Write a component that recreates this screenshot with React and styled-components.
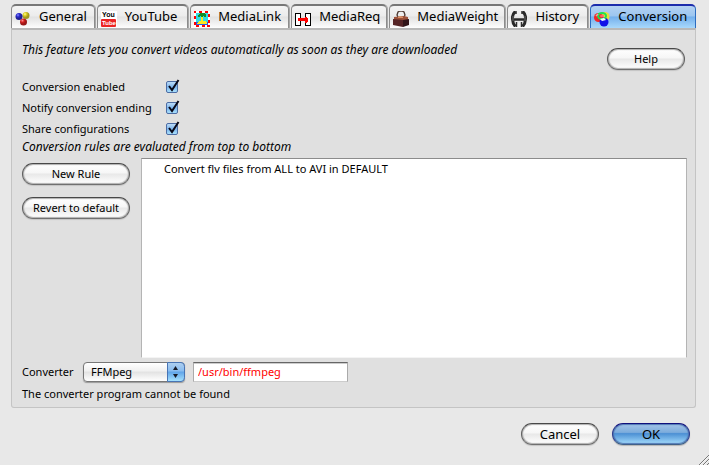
import { useState } from "react";
import styled, { createGlobalStyle } from "styled-components";

const GlobalStyle = createGlobalStyle`
  * {
    box-sizing: border-box;
  }
  body {
    margin: 0;
    background: #fff;
    color: #000;
    font-family: "Noto Sans", "Open Sans", sans-serif;
    font-size: 11px;
    line-height: 16px;
  }
  button, input, select {
    font: inherit;
    color: inherit;
  }
`;

const Window = styled.main`
  position: relative;
  display: flex;
  flex-direction: column;
  min-height: calc(100vh - 6px);
  margin: 0 1px 6px 0;
  padding: 4px 13px 20px 11px;
  background: #e8e8e8;
`;

const TabBar = styled.div`
  display: flex;
  gap: 2px;
  height: 24px;
`;

const Tab = styled.button`
  display: flex;
  flex: ${(props) => props.$weight} 1 0;
  align-items: flex-end;
  gap: 8px;
  min-width: 0;
  padding: 0 0 1px 3px;
  border: 1px solid #666;
  border-color: ${(props) => (props.$active ? "#1c2cac #2c6cc0 #5b86b4" : "#777 #8c8c8c #d0d0d0")};
  border-width: 2px 1px 0;
  border-radius: 5px 5px 0 0;
  background: ${(props) =>
    props.$active
      ? "linear-gradient(#b4d2f2 0, #9cc6f0 45%, #74b0ec 50%, #a8d8fc 100%)"
      : "linear-gradient(#f4f4f4 0, #ececec 45%, #e2e2e2 50%, #fdfdfd 100%)"};
  box-shadow: ${(props) => (props.$active ? "none" : "1px 0 0 #a8a8a8")};
  font-size: 13px;
  line-height: 22px;
  white-space: nowrap;
  svg {
    flex: none;
  }
`;

const Panel = styled.section`
  display: flex;
  flex: 1;
  flex-direction: column;
  padding: 12px 8px 5px 10px;
  border: 1px solid #c4c4c4;
  border-top: 2px solid #b8b8b8;
  border-radius: 0 0 3px 3px;
  background: #e0e0e0;
`;

const Intro = styled.div`
  display: flex;
  align-items: flex-start;
  justify-content: space-between;
  height: 34px;
  padding-right: 2px;
`;

const Note = styled.p`
  margin: 0;
  font-size: 12px;
  font-style: italic;
`;

const PushButton = styled.button`
  min-width: ${(props) => (props.$wide ? "108px" : "78px")};
  height: 22px;
  padding: 0 8px;
  border: 1px solid #666;
  border-color: #484848 #606060 #707070;
  border-radius: 11px;
  background: linear-gradient(#fff 0, #f6f6f6 45%, #e8e8e8 50%, #fff 100%);
  box-shadow: inset 0 0 1px 1px #b0b0b0, 0 1px 1px #c4c4c4;
  font-size: ${(props) => (props.$large ? "13px" : "11px")};
  line-height: 18px;
  white-space: nowrap;
  ${(props) =>
    props.$primary &&
    `
    border-color: #10107c #2c3c8c #406088;
    background: linear-gradient(#a4c4e8 0, #7cacdc 42%, #4c90d4 48%, #a4dcfc 100%);
    box-shadow: inset 0 0 1px 1px #5078b4, 0 1px 1px #b4b4b4;
  `}
`;

const HelpSlot = styled.div`
  padding-top: 6px;
`;

const Options = styled.div`
  display: grid;
  grid-template-columns: 144px 14px;
  grid-auto-rows: 21px;
  align-items: center;
`;

const CheckBox = styled.span`
  position: relative;
  display: block;
  width: 12px;
  height: 12px;
  input {
    display: block;
    appearance: none;
    width: 12px;
    height: 12px;
    margin: 0;
    border: 1px solid #4c6ca4;
    border-radius: 2px;
    background: linear-gradient(#bcdcf8 0, #7cb4ec 50%, #a8e0fc 100%);
  }
  svg {
    position: absolute;
    left: 1px;
    bottom: 1px;
    pointer-events: none;
  }
`;

const Rules = styled.div`
  display: flex;
  flex: 1;
  gap: 11px;
  padding-top: 3px;
`;

const RuleActions = styled.div`
  display: flex;
  flex-direction: column;
  gap: 12px;
  width: 108px;
  padding-top: 5px;
`;

const RuleList = styled.ul`
  flex: 1;
  margin: 0;
  padding: 2px 22px;
  border: 1px solid #b4b4b4;
  border-top-color: #8c8c8c;
  border-bottom-color: #f4f4f4;
  background: #fff;
  list-style: none;
`;

const ConverterRow = styled.div`
  display: flex;
  align-items: center;
  padding-top: 4px;
  label {
    width: 61px;
  }
`;

const PopUp = styled.div`
  position: relative;
  width: 102px;
  height: 20px;
  margin-right: 8px;
  select {
    appearance: none;
    display: block;
    width: 100%;
    height: 20px;
    padding: 0 20px 0 7px;
    border: 1px solid #777;
    border-radius: 4px;
    background: linear-gradient(#fff 0, #f0f0f0 45%, #e2e2e2 50%, #fff 100%);
    box-shadow: 0 1px 1px #999;
  }
  svg {
    position: absolute;
    top: 0;
    right: 0;
    pointer-events: none;
  }
`;

const PathInput = styled.input`
  width: 155px;
  height: 20px;
  padding: 0 4px 1px;
  border: 1px solid #aaa;
  border-top: 1px solid #666;
  border-bottom-color: #ccc;
  background: #fff;
  box-shadow: inset 0 1px 0 #ccc;
  color: #f00;
`;

const Status = styled.p`
  margin: 0;
  padding-top: 4px;
`;

const Footer = styled.footer`
  display: flex;
  justify-content: flex-end;
  gap: 13px;
  padding: 15px 6px 0 0;
`;

const Grip = styled.svg`
  position: absolute;
  right: 0;
  bottom: 0;
`;

const GeneralIcon = () => (
  <svg width="16" height="16" viewBox="0 0 16 16">
    <defs>
      <radialGradient id="gBlue" cx="35%" cy="30%"><stop offset="0" stopColor="#8c8cff" /><stop offset=".5" stopColor="#2828cc" /><stop offset="1" stopColor="#202090" /></radialGradient>
      <radialGradient id="gYellow" cx="35%" cy="30%"><stop offset="0" stopColor="#ffff90" /><stop offset=".5" stopColor="#d8cc20" /><stop offset="1" stopColor="#a09820" /></radialGradient>
      <radialGradient id="gRed" cx="35%" cy="30%"><stop offset="0" stopColor="#ff9090" /><stop offset=".5" stopColor="#d42020" /><stop offset="1" stopColor="#981818" /></radialGradient>
    </defs>
    <circle cx="11" cy="4.500" r="3.500" fill="url(#gYellow)" />
    <circle cx="4" cy="5.500" r="3.500" fill="url(#gBlue)" />
    <circle cx="8.500" cy="11" r="3.500" fill="url(#gRed)" />
  </svg>
);

const YouTubeIcon = () => (
  <svg width="16" height="16" viewBox="0 0 16 16">
    <path d="M0 0h16v16H0z" fill="#fff" />
    <rect x="0" y="8" width="15" height="8" rx="1" fill="#ec2424" />
    <g fontFamily="Liberation Sans, sans-serif" fontWeight="bold">
      <text x="1" y="6" fontSize="7" fill="#000">You</text>
      <text x="1" y="14" fontSize="6" fill="#fff">Tube</text>
    </g>
  </svg>
);

const MediaLinkIcon = () => (
  <svg width="16" height="16" viewBox="0 0 16 16" shapeRendering="crispEdges">
    <path d="M0 0h16v16H0z" fill="#fff" />
    <path d="M0 0h2v2H0zM5 0h3v2H5zM11 0h3v2h-3zM14 3h2v3h-2zM14 9h2v3h-2zM0 5h2v3H0zM0 11h2v3H0zM2 14h3v2H2zM8 14h3v2H8zM13 14h3v2h-3z" fill="red" />
    <path d="M2 2h12v9H2z" fill="#30dce4" />
    <path d="M2 11h12v3H2z" fill="#2858e8" />
    <path d="M3 12l2-2h6l2 2v1H3zM7 5h2v6H7z" fill="#fce820" />
    <path d="M4 6V4l2-2h4l2 2v2h-2V5H9v1H7V5H6v1z" fill="#148c28" />
  </svg>
);

const MediaReqIcon = () => (
  <svg width="16" height="16" viewBox="0 0 16 16" shapeRendering="crispEdges">
    <path d="M.5 2.500h5v12h-5zM10.500 2.500h5v12h-5z" fill="#fff" stroke="#000" />
    <path d="M3 7h7V6h1l2 2v2l-2 2h-1v-2H3z" fill="red" />
  </svg>
);

const WeightIcon = () => (
  <svg width="16" height="16" viewBox="0 0 16 16">
    <path d="M5 6L4 4l1-3 2-1h2l2 1 1 3-1 2" fill="none" stroke="#4c3830" strokeWidth="1.300" />
    <path d="M1 6l10-1 4 1v3H1z" fill="#9c5038" />
    <path d="M5 6l2-1 3 1v1H5z" fill="#dc9064" />
    <path d="M0 8l10 1v7L0 14z" fill="#552426" />
    <path d="M10 9l6-1v6l-6 2z" fill="#321519" />
  </svg>
);

const HistoryIcon = () => (
  <svg width="16" height="16" viewBox="0 0 16 16" fill="none">
    <path d="M4.500.5Q1 3 1.500 8q.3 5 3 7.500M11.500.5Q15 3 14.500 8q-.3 5-3 7.500" stroke="#282828" strokeWidth="3" />
    <path d="M3 8.500h10" stroke="#282828" strokeWidth="2.500" />
    <path d="M5 0v3M11 0v3M5.500 11v5M10.500 11v5" stroke="#303030" strokeWidth="1.500" />
    <path d="M2 5v5M14 5v5" stroke="#686868" />
  </svg>
);

const ConversionIcon = () => (
  <svg width="16" height="16" viewBox="0 0 16 16">
    <circle cx="11" cy="5.500" r="4.500" fill="#e8e038" />
    <circle cx="4.500" cy="6.500" r="4.500" fill="#f02828" />
    <circle cx="10" cy="11" r="4.500" fill="#1010e8" />
    <ellipse cx="8" cy="5" rx="4" ry="3" fill="none" stroke="#20e050" strokeWidth="2" />
    <ellipse cx="8" cy="5" rx="2" ry="1.300" fill="#fc6868" />
    <path d="M6 8l4-1 2 2-4 1z" fill="#f8f8ff" />
    <path d="M2 5l2-2" stroke="#fca0a0" strokeWidth="1.500" />
  </svg>
);

const tabs = [
  { name: "General", weight: 83, Icon: GeneralIcon },
  { name: "YouTube", weight: 91, Icon: YouTubeIcon },
  { name: "MediaLink", weight: 99, Icon: MediaLinkIcon },
  { name: "MediaReq", weight: 96, Icon: MediaReqIcon },
  { name: "MediaWeight", weight: 117, Icon: WeightIcon },
  { name: "History", weight: 80, Icon: HistoryIcon },
  { name: "Conversion", weight: 106, Icon: ConversionIcon },
];

const options = [
  { id: "enabled", text: "Conversion enabled" },
  { id: "notify", text: "Notify conversion ending" },
  { id: "share", text: "Share configurations" },
];

const Option = ({ id, text }) => {
  const [checked, setChecked] = useState(true);
  return (
    <>
      <label htmlFor={id}>{text}</label>
      <CheckBox>
        <input id={id} type="checkbox" checked={checked} onChange={() => setChecked(!checked)} />
        {checked && (
          <svg width="13" height="13" viewBox="0 0 13 13">
            <path d="M2 7l3 4L11.500 1" fill="none" stroke="#080818" strokeWidth="2" />
          </svg>
        )}
      </CheckBox>
    </>
  );
};

const App = () => {
  const [active, setActive] = useState("Conversion");
  return (
    <>
      <GlobalStyle />
      <Window>
        <TabBar role="tablist">
          {tabs.map(({ name, weight, Icon }) => (
            <Tab
              key={name}
              role="tab"
              aria-selected={name === active}
              $weight={weight}
              $active={name === active}
              onClick={() => setActive(name)}
            >
              <Icon />
              {name}
            </Tab>
          ))}
        </TabBar>
        <Panel>
          <Intro>
            <Note>This feature lets you convert videos automatically as soon as they are downloaded</Note>
            <HelpSlot>
              <PushButton>Help</PushButton>
            </HelpSlot>
          </Intro>
          <Options>
            {options.map((option) => (
              <Option key={option.id} {...option} />
            ))}
          </Options>
          <Note>Conversion rules are evaluated from top to bottom</Note>
          <Rules>
            <RuleActions>
              <PushButton $wide>New Rule</PushButton>
              <PushButton $wide>Revert to default</PushButton>
            </RuleActions>
            <RuleList>
              <li>Convert flv files from ALL to AVI in DEFAULT</li>
            </RuleList>
          </Rules>
          <ConverterRow>
            <label htmlFor="converter">Converter</label>
            <PopUp>
              <select id="converter" defaultValue="FFMpeg">
                <option>FFMpeg</option>
              </select>
              <svg width="18" height="20" viewBox="0 0 18 20">
                <defs>
                  <linearGradient id="cap" x2="0" y2="1">
                    <stop offset="0" stopColor="#b0d0f0" />
                    <stop offset=".45" stopColor="#88bcf0" />
                    <stop offset=".5" stopColor="#60a4e8" />
                    <stop offset="1" stopColor="#a8e4ff" />
                  </linearGradient>
                </defs>
                <path d="M.5.500H14q3.500 0 3.500 4v11q0 4-3.500 4H.500z" fill="url(#cap)" stroke="#4874b4" />
                <path d="M6 8L8.500 4 11 8zM6 12h5L8.500 16z" fill="#181c28" />
              </svg>
            </PopUp>
            <PathInput aria-label="Converter path" defaultValue="/usr/bin/ffmpeg" />
          </ConverterRow>
          <Status>The converter program cannot be found</Status>
        </Panel>
        <Footer>
          <PushButton $large>Cancel</PushButton>
          <PushButton $large $primary>OK</PushButton>
        </Footer>
        <Grip width="11" height="11" viewBox="0 0 11 11">
          <path d="M1 11L11 1M5 11l6-6M9 11l2-2" stroke="#777" />
          <path d="M2 11l9-9M6 11l5-5" stroke="#fff" strokeWidth=".6" />
        </Grip>
      </Window>
    </>
  );
};

export default App;
